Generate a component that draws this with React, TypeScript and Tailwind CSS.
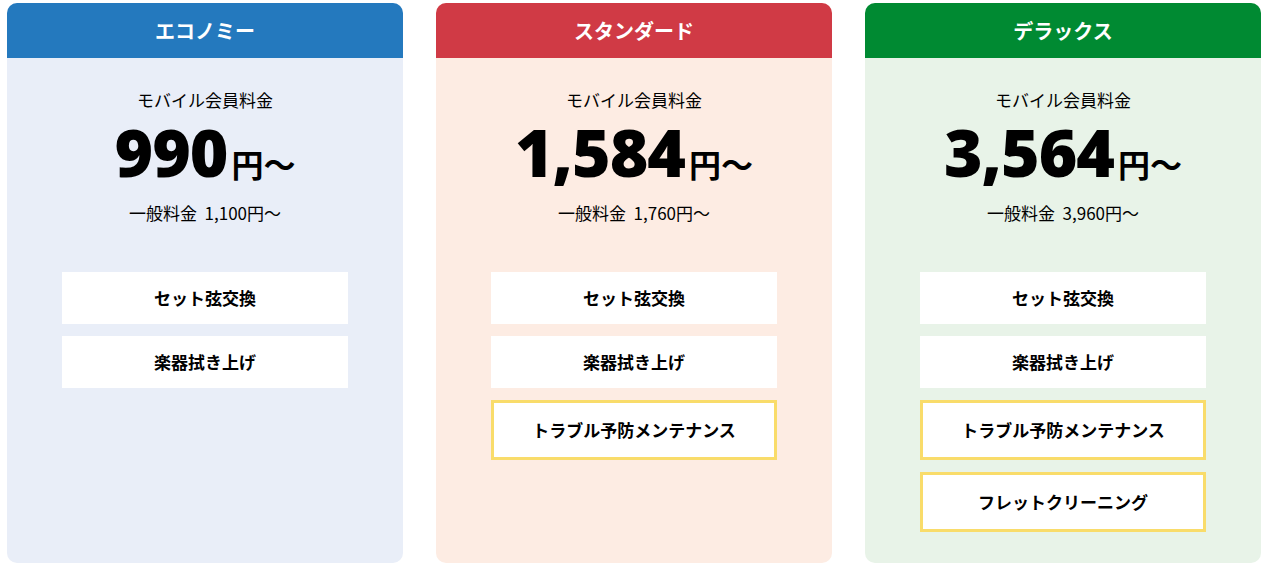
import React from "react";

interface Plan {
  name: string;
  header: string;
  body: string;
  price: string;
  regular: string;
  basic: string[];
  extra: string[];
}

const plans: Plan[] = [
  {
    name: "エコノミー",
    header: "bg-[#2479be]",
    body: "bg-[#e9eef8]",
    price: "990",
    regular: "1,100",
    basic: ["セット弦交換", "楽器拭き上げ"],
    extra: [],
  },
  {
    name: "スタンダード",
    header: "bg-[#d03a45]",
    body: "bg-[#fdece3]",
    price: "1,584",
    regular: "1,760",
    basic: ["セット弦交換", "楽器拭き上げ"],
    extra: ["トラブル予防メンテナンス"],
  },
  {
    name: "デラックス",
    header: "bg-[#008a32]",
    body: "bg-[#e8f3e8]",
    price: "3,564",
    regular: "3,960",
    basic: ["セット弦交換", "楽器拭き上げ"],
    extra: ["トラブル予防メンテナンス", "フレットクリーニング"],
  },
];

const jp = "font-['Noto_Sans_CJK_JP',sans-serif]";

function PlanCard({ plan }: { plan: Plan }) {
  return (
    <div className={`w-[396px] h-[560px] rounded-[10px] overflow-hidden flex flex-col ${plan.body}`}>
      <div className={`h-[55px] flex items-center justify-center text-white text-[20px] font-bold ${plan.header}`}>
        {plan.name}
      </div>
      <div className="flex flex-col items-center pt-[30px] text-black">
        <div className="text-[17px] leading-[24px]">モバイル会員料金</div>
        <div className="flex items-baseline mt-[3px] h-[72px]">
          <span className="font-['Open_Sans',sans-serif] font-extrabold text-[66px] leading-[72px] tracking-[-1px]">
            {plan.price}
          </span>
          <span className="text-[32px] font-bold leading-none ml-[4px]">円〜</span>
        </div>
        <div className="text-[17px] leading-[24px] mt-[14px]">
          一般料金&nbsp;&nbsp;{plan.regular}円〜
        </div>
      </div>
      <div className="flex flex-col items-center gap-[12px] mt-[47px]">
        {plan.basic.map((b) => (
          <div key={b} className="w-[286px] h-[52px] bg-white flex items-center justify-center text-[17px] font-bold">
            {b}
          </div>
        ))}
        {plan.extra.map((b) => (
          <div
            key={b}
            className="w-[286px] h-[60px] bg-white border-[3px] border-[#f9dc6a] flex items-center justify-center text-[17px] font-bold"
          >
            {b}
          </div>
        ))}
      </div>
    </div>
  );
}

export default function App() {
  return (
    <div className={`w-[1266px] h-[575px] bg-white pt-[3px] pl-[7px] flex gap-[33px] ${jp}`}>
      {plans.map((p) => (
        <PlanCard key={p.name} plan={p} />
      ))}
    </div>
  );
}
